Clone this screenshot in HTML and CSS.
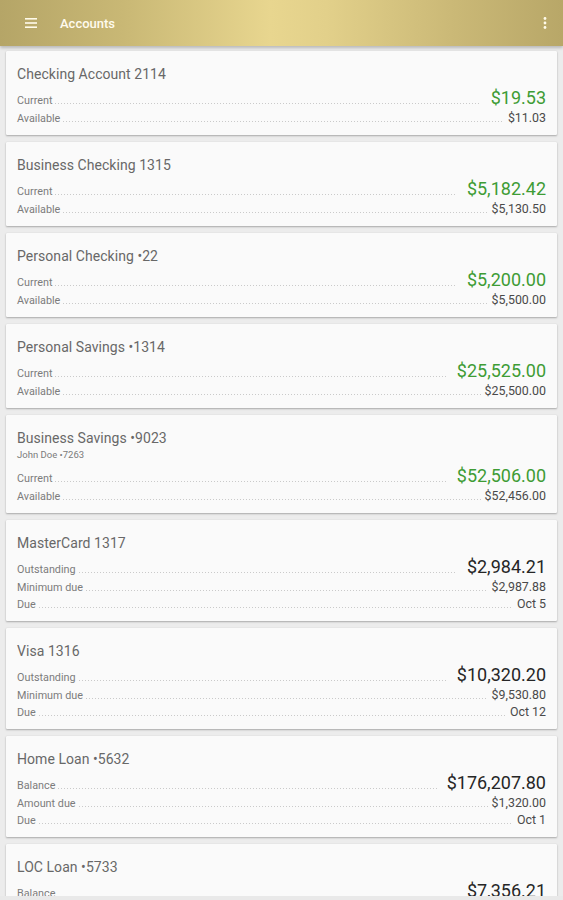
FILE: index.html
```html
<!DOCTYPE html>
<html lang="en">
<head>
<meta charset="utf-8">
<title>Accounts</title>
<link rel="stylesheet" href="styles.css">
</head>
<body>
<header class="appbar">
  <svg class="menu" width="12" height="10" viewBox="0 0 12 10" aria-hidden="true">
    <rect x="0" y="0" width="12" height="1.6" fill="#fffbea"/>
    <rect x="0" y="4.2" width="12" height="1.6" fill="#fffbea"/>
    <rect x="0" y="8.4" width="12" height="1.6" fill="#fffbea"/>
  </svg>
  <span class="appbar-title">Accounts</span>
  <svg class="more" width="4" height="12" viewBox="0 0 4 12" aria-hidden="true">
    <circle cx="2" cy="1.5" r="1.4" fill="#fffbea"/>
    <circle cx="2" cy="6" r="1.4" fill="#fffbea"/>
    <circle cx="2" cy="10.5" r="1.4" fill="#fffbea"/>
  </svg>
</header>

<main class="list">
  <section class="card">
    <div class="card-title">Checking Account 2114</div>
    <div class="row main"><span class="label">Current</span><span class="leader lead-main"></span><span class="big green">$19.53</span></div>
    <div class="row"><span class="label">Available</span><span class="leader"></span><span class="val">$11.03</span></div>
  </section>

  <section class="card">
    <div class="card-title">Business Checking 1315</div>
    <div class="row main"><span class="label">Current</span><span class="leader lead-main"></span><span class="big green">$5,182.42</span></div>
    <div class="row"><span class="label">Available</span><span class="leader"></span><span class="val">$5,130.50</span></div>
  </section>

  <section class="card">
    <div class="card-title">Personal Checking •22</div>
    <div class="row main"><span class="label">Current</span><span class="leader lead-main"></span><span class="big green">$5,200.00</span></div>
    <div class="row"><span class="label">Available</span><span class="leader"></span><span class="val">$5,500.00</span></div>
  </section>

  <section class="card">
    <div class="card-title">Personal Savings •1314</div>
    <div class="row main"><span class="label">Current</span><span class="leader lead-main"></span><span class="big green">$25,525.00</span></div>
    <div class="row"><span class="label">Available</span><span class="leader"></span><span class="val">$25,500.00</span></div>
  </section>

  <section class="card">
    <div class="card-title">Business Savings •9023</div>
    <div class="card-sub">John Doe •7263</div>
    <div class="row main"><span class="label">Current</span><span class="leader lead-main"></span><span class="big green">$52,506.00</span></div>
    <div class="row"><span class="label">Available</span><span class="leader"></span><span class="val">$52,456.00</span></div>
  </section>

  <section class="card">
    <div class="card-title">MasterCard 1317</div>
    <div class="row main"><span class="label">Outstanding</span><span class="leader lead-main"></span><span class="big">$2,984.21</span></div>
    <div class="row"><span class="label">Minimum due</span><span class="leader"></span><span class="val">$2,987.88</span></div>
    <div class="row"><span class="label">Due</span><span class="leader"></span><span class="val">Oct 5</span></div>
  </section>

  <section class="card">
    <div class="card-title">Visa 1316</div>
    <div class="row main"><span class="label">Outstanding</span><span class="leader lead-main"></span><span class="big">$10,320.20</span></div>
    <div class="row"><span class="label">Minimum due</span><span class="leader"></span><span class="val">$9,530.80</span></div>
    <div class="row"><span class="label">Due</span><span class="leader"></span><span class="val">Oct 12</span></div>
  </section>

  <section class="card">
    <div class="card-title">Home Loan •5632</div>
    <div class="row main"><span class="label">Balance</span><span class="leader lead-main"></span><span class="big">$176,207.80</span></div>
    <div class="row"><span class="label">Amount due</span><span class="leader"></span><span class="val">$1,320.00</span></div>
    <div class="row"><span class="label">Due</span><span class="leader"></span><span class="val">Oct 1</span></div>
  </section>

  <section class="card">
    <div class="card-title">LOC Loan •5733</div>
    <div class="row main"><span class="label">Balance</span><span class="leader lead-main"></span><span class="big">$7,356.21</span></div>
  </section>
</main>
</body>
</html>
```

FILE: styles.css
```css
html, body {
  margin: 0;
  padding: 0;
}

body {
  background: #e9e9e9;
  font-family: Roboto, "Noto Sans", "Liberation Sans", sans-serif;
  width: 563px;
  height: 900px;
  overflow: hidden;
}

.appbar {
  position: relative;
  z-index: 2;
  height: 46px;
  display: flex;
  align-items: center;
  padding: 0 16px 0 25px;
  background: linear-gradient(to right, #b5a567 0%, #c9b875 22%, #e8d68f 48%, #e2d08a 58%, #cbb977 80%, #b8a768 100%);
  box-shadow: 0 2px 3px rgba(0, 0, 0, 0.22);
}

.menu {
  display: block;
  flex: none;
}

.appbar-title {
  margin-left: 23px;
  color: #fffbee;
  font-size: 13px;
  font-weight: 500;
  flex: 1;
}

.more {
  display: block;
  flex: none;
}

.list {
  display: flex;
  flex-direction: column;
  gap: 7px;
  padding: 5px 6px 0;
  height: 845px;
  overflow: hidden;
  background: #ececec;
}

.card {
  flex: none;
  background: #fafafa;
  padding: 13px 11px 9px;
  box-shadow: 0 1px 2px rgba(0, 0, 0, 0.28), 0 0 1px rgba(0, 0, 0, 0.12);
  border-radius: 1px;
}

.card-title {
  font-size: 14px;
  line-height: 20px;
  height: 20px;
  color: #686868;
  letter-spacing: 0.05px;
}

.card-sub {
  font-size: 9.5px;
  line-height: 14px;
  height: 14px;
  color: #7a7a7a;
}

.row {
  display: flex;
  align-items: baseline;
  height: 17px;
  line-height: 17px;
}

.row.main {
  height: 20px;
  margin-top: 5px;
}

.label {
  font-size: 10.8px;
  color: #7c7c7c;
  flex: none;
}

.leader {
  flex: 1;
  height: 1px;
  margin: 0 4px 0 3px;
  background-image: linear-gradient(to right, #cacaca 1px, transparent 1px);
  background-size: 3px 1px;
  background-repeat: repeat-x;
}

.lead-main {
  margin-right: 10px;
}

.val {
  font-size: 12.4px;
  color: #4a4a4a;
  flex: none;
}

.big {
  font-size: 18px;
  color: #262626;
  flex: none;
}

.big.green {
  color: #3e9c35;
}
```
